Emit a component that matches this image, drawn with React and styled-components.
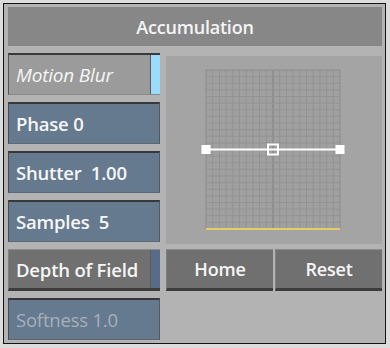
import React from "react";
import styled, { createGlobalStyle, css } from "styled-components";

const Global = createGlobalStyle`
  html, body { margin: 0; padding: 0; background: #dcdcdc; }
  body { font-family: "Open Sans", "Liberation Sans", sans-serif; }
  * { box-sizing: border-box; }
`;

const Frame = styled.div`
  margin: 3px;
  width: 383px;
  height: 341px;
  border: 1px solid #141414;
  background: #b3b3b3;
  padding: 3px 3px 0 4px;
  display: flex;
  flex-direction: column;
  gap: 7px;
`;

const Header = styled.div`
  height: 39px;
  background: #878787;
  color: #f4f4f4;
  font-size: 18px;
  font-weight: 600;
  display: flex;
  align-items: center;
  justify-content: center;
  letter-spacing: -0.2px;
`;

const Body = styled.div`
  display: grid;
  grid-template-columns: 152px 216px;
  grid-template-rows: repeat(6, 42px);
  column-gap: 6px;
  row-gap: 7px;
`;

const Btn = styled.div`
  position: relative;
  display: flex;
  align-items: center;
  padding-left: 7px;
  font-size: 18.5px;
  font-weight: 600;
  color: #f6f6f6;
  white-space: pre;
  letter-spacing: -0.2px;
  ${(p) =>
    p.$variant === "toggleOn" &&
    css`
      background: #9b9b9b;
      border-top: 2px solid #3a3a3a;
      border-left: 1px solid #555;
      border-bottom: 1px solid #8a8a8a;
      font-style: italic;
      font-weight: 500;
      font-size: 19px;
    `}
  ${(p) =>
    p.$variant === "field" &&
    css`
      background: #65798f;
      border-top: 2px solid #383838;
      border-left: 1px solid #4a4a4a;
      border-right: 1px solid #4f5a66;
      border-bottom: 1px solid #5a6878;
    `}
  ${(p) =>
    p.$variant === "raised" &&
    css`
      background: #707070;
      border-top: 1px solid #8a8a8a;
      border-left: 1px solid #808080;
      border-bottom: 3px solid #3c3c3c;
    `}
  ${(p) =>
    p.$dim &&
    css`
      color: #a7b0bb;
      font-weight: 500;
    `}
  ${(p) =>
    p.$center &&
    css`
      justify-content: center;
      padding-left: 0;
      font-size: 18px;
    `}
`;

const Indicator = styled.span`
  position: absolute;
  right: 0;
  top: 0;
  bottom: 0;
  width: 10px;
  background: ${(p) => p.$color};
  border-left: 1px solid #5c5c5c;
`;

const Canvas = styled.div`
  grid-column: 2;
  grid-row: 1 / span 4;
  margin-top: 3px;
  margin-bottom: -2px;
  background: #a4a4a4;
  display: flex;
  align-items: center;
  justify-content: center;
`;

const ButtonRow = styled.div`
  grid-column: 2;
  grid-row: 5;
  display: grid;
  grid-template-columns: 107px 107px;
  column-gap: 2px;
`;

function CurveGraph() {
  const gx0 = 5, gx1 = 139, gy0 = 1, gy1 = 160;
  const cols = 20, rows = 24;
  const lines = [];
  for (let i = 0; i <= cols; i++) {
    const x = gx0 + ((gx1 - gx0) * i) / cols;
    lines.push(
      <line key={"v" + i} x1={x} x2={x} y1={gy0} y2={gy1}
        stroke={i === 10 ? "#7e7e7e" : i === 0 || i === cols ? "#8c8c8c" : "#939393"}
        strokeWidth="1" />
    );
  }
  for (let j = 0; j <= rows; j++) {
    const y = gy0 + ((gy1 - gy0) * j) / rows;
    lines.push(
      <line key={"h" + j} x1={gx0} x2={gx1} y1={y} y2={y}
        stroke={j === 0 ? "#8c8c8c" : "#939393"} strokeWidth="1" />
    );
  }
  return (
    <svg width="146" height="162" viewBox="0 0 146 162">
      <rect x={gx0} y={gy0} width={gx1 - gx0} height={gy1 - gy0} fill="#a0a0a0" />
      {lines}
      <rect x={gx0} y={159} width={gx1 - gx0} height={2} fill="#e3cc6a" />
      <line x1={5} x2={139} y1={80.5} y2={80.5} stroke="#ffffff" strokeWidth="2" />
      <rect x={0.5} y={76} width={9} height={9} fill="#ffffff" />
      <rect x={134.5} y={76} width={9} height={9} fill="#ffffff" />
      <rect x={67} y={75.5} width={10} height={10} fill="none" stroke="#ffffff" strokeWidth="2" />
    </svg>
  );
}

export default function App() {
  return (
    <>
      <Global />
      <Frame>
        <Header>Accumulation</Header>
        <Body>
          <Btn $variant="toggleOn">
            Motion Blur
            <Indicator $color="#9adcfb" />
          </Btn>
          <Canvas>
            <CurveGraph />
          </Canvas>
          <Btn $variant="field">Phase 0</Btn>
          <Btn $variant="field">Shutter  1.00</Btn>
          <Btn $variant="field">Samples  5</Btn>
          <Btn $variant="raised">
            Depth of Field
            <Indicator $color="#566c8a" />
          </Btn>
          <ButtonRow>
            <Btn $variant="raised" $center>Home</Btn>
            <Btn $variant="raised" $center>Reset</Btn>
          </ButtonRow>
          <Btn $variant="field" $dim>Softness 1.0</Btn>
        </Body>
      </Frame>
    </>
  );
}
